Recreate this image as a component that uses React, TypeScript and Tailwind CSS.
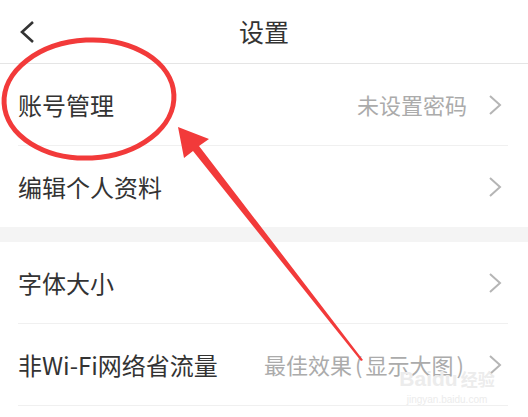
import React from 'react';

interface Row {
  label: string;
  value?: React.ReactNode;
}

const groupOne: Row[] = [
  { label: '账号管理', value: '未设置密码' },
  { label: '编辑个人资料' },
];

const groupTwo: Row[] = [
  { label: '字体大小' },
  {
    label: '非Wi-Fi网络省流量',
    value: (
      <>
        最佳效果<span className="px-[3px]">(</span>显示大图<span className="px-[3px]">)</span>
      </>
    ),
  },
];

function Chevron() {
  return (
    <svg width="14" height="20" viewBox="0 0 14 20" className="shrink-0">
      <path d="M2 1 L12 10 L2 19" fill="none" stroke="#b5b5b5" strokeWidth="2" />
    </svg>
  );
}

function SettingRow({ row }: { row: Row }) {
  return (
    <div className="ml-[18px] mr-[20px] h-[82px] flex items-center border-b border-[#f0f0f0]">
      <span className="flex-1 text-[24px] text-[#333333] whitespace-nowrap">{row.label}</span>
      {row.value && (
        <span className="text-[22px] text-[#ababab] mr-[21px] whitespace-nowrap">{row.value}</span>
      )}
      <span className="mr-[6px]">
        <Chevron />
      </span>
    </div>
  );
}

export default function App() {
  return (
    <div
      className="relative w-[528px] h-[417px] overflow-hidden bg-white"
      style={{ fontFamily: '"Noto Sans CJK SC", "Noto Sans", sans-serif' }}
    >
      {/* header */}
      <div className="h-[64px] flex items-center justify-center relative border-b border-[#e5e5e5]">
        <svg width="16" height="24" viewBox="0 0 16 24" className="absolute left-[19px] top-[20px]">
          <path d="M14 2 L3 12 L14 22" fill="none" stroke="#333333" strokeWidth="2.6" />
        </svg>
        <span className="text-[25px] text-[#333333]">设置</span>
      </div>

      {groupOne.map((r) => (
        <SettingRow key={r.label} row={r} />
      ))}
      <div className="h-[15px] bg-[#f4f4f4] -mt-px" />
      {groupTwo.map((r) => (
        <SettingRow key={r.label} row={r} />
      ))}

      {/* watermark */}
      <div className="absolute left-[398px] top-[368px] w-[98px] flex flex-col items-center leading-none text-[#ececec] whitespace-nowrap">
        <span className="text-[21px] font-bold" style={{ fontFamily: '"Liberation Sans", sans-serif' }}>
          Baidu<span className="text-[17px] ml-[3px]" style={{ fontFamily: '"Noto Sans CJK SC", sans-serif' }}>经验</span>
        </span>
        <span className="text-[10px] mt-[6px]" style={{ fontFamily: '"Liberation Sans", sans-serif' }}>jingyan.baidu.com</span>
      </div>

      {/* red annotation */}
      <svg className="absolute inset-0 pointer-events-none" width="528" height="417" viewBox="0 0 528 417">
        <ellipse cx="89" cy="99" rx="85" ry="59" fill="none" stroke="#f23a3a" strokeWidth="5" transform="rotate(-3 89 99)" />
        <polygon
          points="178,127 209,139 199,146 363,360 361,361 193,151 184,158"
          fill="#f23a3a"
        />
      </svg>
    </div>
  );
}
